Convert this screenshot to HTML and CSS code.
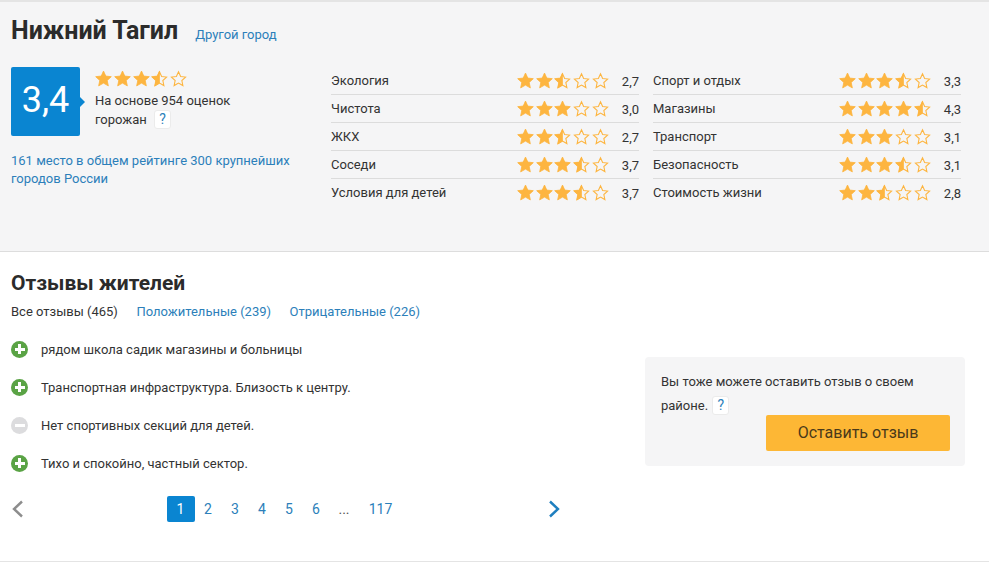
FILE: index.html
```html
<!DOCTYPE html>
<html lang="en">
<head>
    <meta charset="UTF-8">
    <title>Нижний Тагил</title>
    <link rel="stylesheet" href="styles.css">
</head>
<body>
    <svg class="defs" width="0" height="0">
        <symbol id="star-full" viewBox="0 0 24 24">
            <polygon points="12,1.5 15.2,8.6 23,9.4 17.2,14.7 18.8,22.4 12,18.5 5.2,22.4 6.8,14.7 1,9.4 8.8,8.6" fill="#fdb540" stroke="#fdb540" stroke-width="1.2"/>
        </symbol>
        <symbol id="star-empty" viewBox="0 0 24 24">
            <polygon points="12,2.5 15,9.2 22,10 16.7,14.8 18.2,22 12,18.4 5.8,22 7.3,14.8 2,10 9,9.2" fill="none" stroke="#fdb540" stroke-width="1.5"/>
        </symbol>
        <symbol id="star-half" viewBox="0 0 24 24">
            <polygon points="12,2.5 15,9.2 22,10 16.7,14.8 18.2,22 12,18.4 5.8,22 7.3,14.8 2,10 9,9.2" fill="none" stroke="#fdb540" stroke-width="1.5"/>
            <polygon points="12,1.5 12,18.5 5.2,22.4 6.8,14.7 1,9.4 8.8,8.6" fill="#fdb540" stroke="#fdb540" stroke-width="1"/>
        </symbol>
    </svg>

    <section class="city">
        <div class="city-head">
            <h1>Нижний Тагил</h1>
            <a class="link" href="#">Другой город</a>
        </div>
        <div class="city-body">
            <div class="summary">
                <div class="summary-top">
                    <div class="score">3,4</div>
                    <div class="score-info">
                        <div class="stars stars-big">
                            <svg><use href="#star-full"/></svg><svg><use href="#star-full"/></svg><svg><use href="#star-full"/></svg><svg><use href="#star-half"/></svg><svg><use href="#star-empty"/></svg>
                        </div>
                        <p>На основе 954 оценок<br>горожан <span class="help">?</span></p>
                    </div>
                </div>
                <a class="link place" href="#">161 место в общем рейтинге 300 крупнейших городов России</a>
            </div>
            <div class="ratings">
                <div class="rate-col">
                    <div class="rate"><span class="rate-name">Экология</span><div class="stars"><svg><use href="#star-full"/></svg><svg><use href="#star-full"/></svg><svg><use href="#star-half"/></svg><svg><use href="#star-empty"/></svg><svg><use href="#star-empty"/></svg></div><span class="rate-val">2,7</span></div>
                    <div class="rate"><span class="rate-name">Чистота</span><div class="stars"><svg><use href="#star-full"/></svg><svg><use href="#star-full"/></svg><svg><use href="#star-full"/></svg><svg><use href="#star-empty"/></svg><svg><use href="#star-empty"/></svg></div><span class="rate-val">3,0</span></div>
                    <div class="rate"><span class="rate-name">ЖКХ</span><div class="stars"><svg><use href="#star-full"/></svg><svg><use href="#star-full"/></svg><svg><use href="#star-half"/></svg><svg><use href="#star-empty"/></svg><svg><use href="#star-empty"/></svg></div><span class="rate-val">2,7</span></div>
                    <div class="rate"><span class="rate-name">Соседи</span><div class="stars"><svg><use href="#star-full"/></svg><svg><use href="#star-full"/></svg><svg><use href="#star-full"/></svg><svg><use href="#star-half"/></svg><svg><use href="#star-empty"/></svg></div><span class="rate-val">3,7</span></div>
                    <div class="rate"><span class="rate-name">Условия для детей</span><div class="stars"><svg><use href="#star-full"/></svg><svg><use href="#star-full"/></svg><svg><use href="#star-full"/></svg><svg><use href="#star-half"/></svg><svg><use href="#star-empty"/></svg></div><span class="rate-val">3,7</span></div>
                </div>
                <div class="rate-col">
                    <div class="rate"><span class="rate-name">Спорт и отдых</span><div class="stars"><svg><use href="#star-full"/></svg><svg><use href="#star-full"/></svg><svg><use href="#star-full"/></svg><svg><use href="#star-half"/></svg><svg><use href="#star-empty"/></svg></div><span class="rate-val">3,3</span></div>
                    <div class="rate"><span class="rate-name">Магазины</span><div class="stars"><svg><use href="#star-full"/></svg><svg><use href="#star-full"/></svg><svg><use href="#star-full"/></svg><svg><use href="#star-full"/></svg><svg><use href="#star-half"/></svg></div><span class="rate-val">4,3</span></div>
                    <div class="rate"><span class="rate-name">Транспорт</span><div class="stars"><svg><use href="#star-full"/></svg><svg><use href="#star-full"/></svg><svg><use href="#star-full"/></svg><svg><use href="#star-empty"/></svg><svg><use href="#star-empty"/></svg></div><span class="rate-val">3,1</span></div>
                    <div class="rate"><span class="rate-name">Безопасность</span><div class="stars"><svg><use href="#star-full"/></svg><svg><use href="#star-full"/></svg><svg><use href="#star-full"/></svg><svg><use href="#star-half"/></svg><svg><use href="#star-empty"/></svg></div><span class="rate-val">3,1</span></div>
                    <div class="rate"><span class="rate-name">Стоимость жизни</span><div class="stars"><svg><use href="#star-full"/></svg><svg><use href="#star-full"/></svg><svg><use href="#star-half"/></svg><svg><use href="#star-empty"/></svg><svg><use href="#star-empty"/></svg></div><span class="rate-val">2,8</span></div>
                </div>
            </div>
        </div>
    </section>

    <section class="reviews">
        <h2>Отзывы жителей</h2>
        <div class="tabs">
            <span>Все отзывы (465)</span>
            <a class="link" href="#">Положительные (239)</a>
            <a class="link" href="#">Отрицательные (226)</a>
        </div>
        <div class="reviews-body">
            <div class="reviews-main">
                <ul class="review-list">
                    <li><span class="mark mark-plus"></span>рядом школа садик магазины и больницы</li>
                    <li><span class="mark mark-plus"></span>Транспортная инфраструктура. Близость к центру.</li>
                    <li><span class="mark mark-minus"></span>Нет спортивных секций для детей.</li>
                    <li><span class="mark mark-plus"></span>Тихо и спокойно, частный сектор.</li>
                </ul>
                <div class="pager">
                    <svg class="chevron" width="13" height="18" viewBox="0 0 13 18"><path d="M11 1.5 3 9l8 7.5" fill="none" stroke="#8d8d8d" stroke-width="2.4"/></svg>
                    <div class="pages">
                        <a class="page current" href="#">1</a>
                        <a class="page" href="#">2</a>
                        <a class="page" href="#">3</a>
                        <a class="page" href="#">4</a>
                        <a class="page" href="#">5</a>
                        <a class="page" href="#">6</a>
                        <span class="page dots">...</span>
                        <a class="page last" href="#">117</a>
                    </div>
                    <svg class="chevron" width="13" height="18" viewBox="0 0 13 18"><path d="M2 1.5 10 9l-8 7.5" fill="none" stroke="#1f7fbf" stroke-width="2.4"/></svg>
                </div>
            </div>
            <aside class="cta">
                <p>Вы тоже можете оставить отзыв о своем<br>районе. <span class="help">?</span></p>
                <a class="cta-button" href="#">Оставить отзыв</a>
            </aside>
        </div>
    </section>
</body>
</html>
```

FILE: styles.css
```css
* {
    margin: 0;
    padding: 0;
    box-sizing: border-box;
}

body {
    font-family: 'Roboto', sans-serif;
    font-size: 13px;
    color: #333333;
    background: #ffffff;
    height: 563px;
    overflow: hidden;
}

.defs {
    position: absolute;
}

a {
    text-decoration: none;
}

.link {
    color: #2c7fba;
}

.city {
    height: 252px;
    padding: 0 28px 0 11px;
    background: #f5f5f6;
    border-top: 2px solid #e4e4e4;
    border-bottom: 1px solid #dddddd;
}

.city-head {
    display: flex;
    align-items: baseline;
    gap: 17px;
    padding-top: 15px;
}

h1 {
    font-size: 25px;
    line-height: 28px;
    font-weight: 700;
    color: #2b2b2b;
}

.city-body {
    display: flex;
    margin-top: 22px;
}

.summary {
    width: 320px;
    flex-shrink: 0;
}

.summary-top {
    display: flex;
    gap: 15px;
}

.score {
    position: relative;
    width: 69px;
    height: 69px;
    border-radius: 2px;
    background: #0a85d1;
    color: #ffffff;
    font-size: 36px;
    line-height: 66px;
    text-align: center;
}

.score::after {
    content: "";
    position: absolute;
    top: 30px;
    right: -5px;
    border-left: 5px solid #0a85d1;
    border-top: 5px solid transparent;
    border-bottom: 5px solid transparent;
}

.stars {
    display: flex;
    gap: 1.7px;
}

.stars svg {
    width: 17px;
    height: 17px;
}

.stars-big {
    gap: 1.8px;
    margin-top: 3px;
}

.score-info p {
    margin-top: 4px;
    line-height: 19px;
}

.help {
    display: inline-block;
    width: 17px;
    height: 19px;
    margin-left: 4px;
    border: 1px solid #ebebeb;
    border-radius: 3px;
    background: #ffffff;
    color: #2c7fba;
    font-size: 14px;
    line-height: 17px;
    text-align: center;
}

.place {
    display: block;
    width: 290px;
    margin-top: 16px;
    line-height: 18px;
}

.ratings {
    display: flex;
    gap: 14px;
    width: 630px;
}

.rate-col {
    width: 308px;
}

.rate {
    display: flex;
    align-items: center;
    height: 28px;
    border-bottom: 1px solid #dcdcdc;
}

.rate:last-child {
    border-bottom-color: transparent;
}

.rate-name {
    width: 186px;
}

.rate-val {
    margin-left: auto;
    padding-top: 2px;
}

.reviews {
    height: 310px;
    padding: 19px 24px 0 11px;
    border-bottom: 1px solid #e4e4e4;
}

h2 {
    font-size: 21px;
    line-height: 24px;
    font-weight: 700;
    color: #2b2b2b;
}

.tabs {
    display: flex;
    gap: 18.5px;
    margin-top: 8px;
    line-height: 18px;
}

.reviews-body {
    display: flex;
    justify-content: space-between;
    margin-top: 9px;
}

.reviews-main {
    width: 550px;
}

.review-list {
    list-style: none;
}

.review-list li {
    display: flex;
    align-items: center;
    gap: 13px;
    height: 38px;
}

.mark {
    position: relative;
    width: 17px;
    height: 17px;
    border-radius: 50%;
    flex-shrink: 0;
}

.mark::before,
.mark-plus::after {
    content: "";
    position: absolute;
    top: 7px;
    left: 3.5px;
    width: 10px;
    height: 3px;
    background: #ffffff;
}

.mark-plus::after {
    top: 3.5px;
    left: 7px;
    width: 3px;
    height: 10px;
}

.mark-plus {
    background: #5aa345;
}

.mark-minus {
    background: #dcdcde;
}

.pager {
    display: flex;
    align-items: center;
    justify-content: space-between;
    margin-top: 14px;
}

.pages {
    display: flex;
    align-items: center;
    margin-right: 3px;
}

.page {
    display: block;
    width: 27px;
    height: 26px;
    color: #2c7fba;
    font-size: 14px;
    line-height: 26px;
    text-align: center;
}

.current {
    width: 28px;
    border-radius: 2px;
    background: #0a85d1;
    color: #ffffff;
}

.dots {
    width: 29px;
    color: #555555;
}

.last {
    width: 44px;
}

.cta {
    width: 320px;
    height: 109px;
    margin-top: 27px;
    padding: 13px 15px 15px 16px;
    border-radius: 4px;
    background: #f5f5f6;
}

.cta p {
    line-height: 24px;
}

.cta .help {
    margin-left: 1px;
}

.cta-button {
    display: block;
    width: 184px;
    height: 36px;
    margin-left: auto;
    margin-top: -3px;
    border-radius: 2px;
    background: #fdb735;
    color: #4a3a1a;
    font-size: 16px;
    line-height: 36px;
    text-align: center;
}
```
